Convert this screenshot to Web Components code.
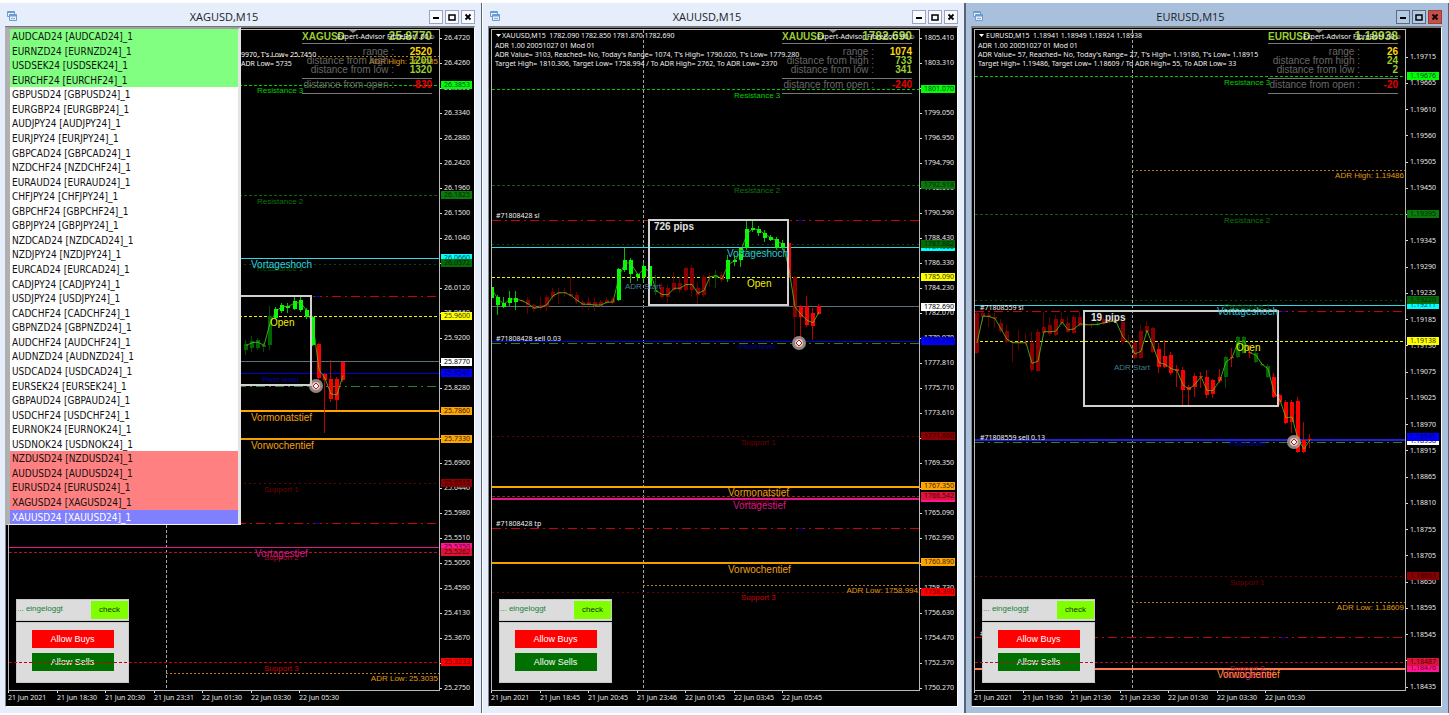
<!DOCTYPE html>
<html lang="de">
<head>
<meta charset="utf-8">
<title>Charts</title>
<style>
  html, body { margin: 0; height: 100%; background: #fff; }
  body { font-family: "Liberation Sans", Arial, sans-serif; overflow: hidden; }
</style>
</head>
<body>
<chart-desktop>
  <chart-window symbol="XAGUSD"></chart-window>
  <chart-window symbol="XAUUSD"></chart-window>
  <chart-window symbol="EURUSD" active></chart-window>
  <symbol-list slot="popup"></symbol-list>
</chart-desktop>

<script>
const SMALL = '"Noto Sans", "Open Sans", sans-serif';
const RED = '#ff0000', DARK = '#8a0000', LIME = '#00ff00', DG = '#006400';

/* Line styles: name -> [colour, width, dash pattern] */
const STYLES = {
  r3: ['#00c800', 1, '3 2'], r2: ['#0a640a', 1, '3 2'], r1: ['#064a06', 1, '2 3'],
  s1: ['#6a0000', 1, '2 3'], s2: ['#b01030', 1, '3 2'], s3: ['#c80000', 1, '3 2'],
  cyan: ['#30d8e8', 1, ''], open: ['#f0f000', 1, '3 2'], bid: ['#5c6e78', 1, ''],
  pivot: ['#0000d8', 1, ''], month: ['#ffa500', 2, ''], week: ['#f0a000', 2, ''],
  pink: ['#e01888', 1, ''], coral: ['#ff7a50', 2, ''], sl: ['#c80010', 1, '9 4 2 4'],
  order: ['#308030', 1, '9 4 2 4'], adr: ['#b87c10', 1, '2 2'], navy: ['#2020e0', 2, '']
};

/* x is measured from the window's left edge, y from the top of the desktop. */
const CHARTS = {
  XAGUSD: {
    axis: 34, last: '25.8770', range: ['2520', '1200', '1320', '-830'], pad: [6, 0],
    notes: [['9970, T\'s Low= 25.7450', 241, 57], ['ADR Low= 5735', 241, 66]],
    scale: '26.4720 26.4260 26.3800 26.3340 26.2880 26.2420 26.1960 26.1500 26.1040 26.0580 26.0120 25.9660 25.9200 25.8740 25.8280 25.7820 25.7360 25.6900 25.6440 25.5980 25.5510 25.5050 25.4590 25.4130 25.3670 25.3210 25.2750',
    times: ['21 Jun 2021', '21 Jun 18:30', '21 Jun 20:30', '21 Jun 23:31', '22 Jun 01:30', '22 Jun 03:30', '22 Jun 05:30'],
    vline: 166, box: [168, 296, 311, 385], marker: [316, 386],
    lines: [['adr', 56, 166], ['r3', 85], ['r2', 195], ['cyan', 258], ['r1', 264], ['sl', 296], ['open', 316], ['bid', 361], ['pivot', 373], ['order', 386], ['month', 411], ['week', 439], ['s1', 483], ['sl', 523], ['pink', 547], ['s2', 552], ['adr', 673, 166]],
    top: [['s3', 662]], blue: [296, 523],
    labels: [['Resistance 3', 257, 93, '#00d000', 8], ['Resistance 2', 257, 204, '#0a780a', 8], ['Resistance 1', 257, 271, '#065a06', 8], ['Vortageshoch', 251, 268, '#30d0e0', 10], ['Open', 270, 326, '#f0f000', 10], ['Pivot level', 262, 382, '#0000b0', 8], ['Vormonatstief', 251, 421, '#f0a010', 10], ['Vorwochentief', 251, 449, '#f0a010', 10], ['Support 1', 264, 492, '#700000', 8], ['Support 2', 264, 560, '#b01030', 8], ['Vortagestief', 255, 557, '#d01880', 10], ['Support 3', 264, 671, '#d00000', 8]],
    adr: [['ADR High: 26.4085', 64], ['ADR Low: 25.3035', 681]],
    tags: [['26.3853', 85, '#00ff00', '#043'], ['26.1825', 195, '#0a7a0a', '#042a04'], ['26.0660', 258, '#00ffff', '#046'], ['26.0572', 263, '#066a06', '#021'], ['25.9600', 316, '#ffff00', '#330'], ['25.8770', 362, '#ffffff', '#000'], ['25.8540', 373, '#0000ff', '#000060'], ['25.7860', 411, '#ffa500', '#321'], ['25.7330', 439, '#ffa500', '#321'], ['25.6515', 483, '#8b0000', '#300'], ['25.5350', 547, '#ff1493', '#602'], ['25.5262', 552, '#dc143c', '#500'], ['25.3233', 662, '#ff0000', '#600']],
    start: 245,
    candles: [[340,344,350,355,DG],[336,341,348,352,DG],[338,340,348,350,DG],[343,345,347,352,DG],[306,316,345,350,DG],[307,309,318,319,LIME],[303,305,311,313,LIME],[303,306,308,313,LIME],[297,301,309,310,LIME],[297,300,310,312,LIME],[308,310,317,319,LIME],[316,317,345,346,LIME],[343,344,378,380,RED],[373,374,380,433,RED],[360,379,399,402,RED],[377,379,400,410,RED],[361,362,380,382,RED]]
  },
  XAUUSD: {
    axis: 37, last: '1782.690', range: ['1074', '733', '341', '-240'], pad: [6, 0],
    notes: [['XAUUSD,M15  1782.090 1782.850 1781.870 1782.690', 19, 38], ['ADR 1.00 20051027 01 Mod 01', 12, 48], ['ADR Value= 3103, Reached= No, Today\'s Range= 1074, T\'s High= 1790.020, T\'s Low= 1779.280', 12, 57], ['Target High= 1810.306, Target Low= 1758.994 / To ADR High= 2762, To ADR Low= 2370', 12, 66], ['#71808428 sl', 13, 218], ['#71808428 sell 0.03', 13, 341], ['#71808428 tp', 13, 526]],
    scale: '1805.410 1803.310 1801.210 1799.050 1796.950 1794.790 1792.690 1790.590 1788.430 1786.330 1784.230 1782.070 1779.970 1777.810 1775.710 1773.610 1771.450 1769.350 1767.250 1765.090 1762.990 1760.890 1758.730 1756.630 1754.470 1752.370 1750.270',
    times: ['21 Jun 2021', '21 Jun 18:45', '21 Jun 20:45', '21 Jun 23:46', '22 Jun 01:45', '22 Jun 03:45', '22 Jun 05:45'],
    vline: 160, box: [166, 220, 305, 305], marker: [316, 343], pips: ['726 pips', 171, 230], start: 8,
    lines: [['r3', 89], ['r2', 185], ['sl', 220], ['r1', 244], ['cyan', 247], ['open', 277], ['bid', 306], ['pivot', 341], ['order', 343], ['s1', 436], ['month', 487], ['s2', 496], ['pink', 498], ['pink', 499], ['sl', 528], ['week', 563], ['adr', 585, 160], ['s1', 592]],
    top: [], blue: [220, 528],
    labels: [['Resistance 3', 251, 98, '#00d000', 8], ['Resistance 2', 251, 193, '#0a780a', 8], ['Resistance 1', 251, 254, '#064a06', 8], ['Vortageshoch', 244, 257, '#30c0d0', 10], ['ADR Start', 142, 289, '#4a7c98', 8], ['Open', 264, 287, '#f0f000', 10], ['Pivot level', 256, 349, '#0000b0', 8], ['Support 1', 258, 445, '#700000', 8], ['Vormonatstief', 245, 496, '#f0a010', 10], ['Support 2', 258, 505, '#900020', 8], ['Vortagestief', 250, 509, '#d01880', 10], ['Vorwochentief', 245, 573, '#f0a010', 10], ['Support 3', 258, 600, '#d00000', 8]],
    adr: [['ADR Low: 1758.994', 593]],
    tags: [['1801.070', 89, '#00ff00', '#043'], ['1792.918', 185, '#0a7a0a', '#042a04'], ['1787.660', 247, '#00ffff', '#046'], ['1787.882', 244, '#066a06', '#021'], ['1785.090', 277, '#ffff00', '#330'], ['1782.690', 307, '#ffffff', '#000'], ['1779.770', 341, '#0000ff', '#000060'], ['1771.660', 436, '#8b0000', '#300'], ['1767.350', 486, '#ffa500', '#321'], ['1766.320', 498, '#ff1493', '#602'], ['1766.542', 496, '#dc143c', '#500'], ['1760.890', 562, '#ffa500', '#321'], ['1758.390', 592, '#ff0000', '#600']],
    candles: [[272,287,298,299,LIME],[295,297,305,315,LIME],[297,303,307,308,LIME],[291,298,303,306,LIME],[291,298,302,310,LIME],[299,300,301,302,DARK],[297,300,305,314,DARK],[304,305,309,312,DARK],[297,305,308,310,DARK],[295,297,307,311,DARK],[288,292,297,300,DARK],[288,292,293,304,DARK],[288,292,293,297,DARK],[277,294,296,297,DARK],[292,295,302,304,DARK],[300,302,305,309,DARK],[297,302,305,310,DARK],[298,302,306,311,DARK],[300,302,306,307,DARK],[297,300,303,304,DARK],[297,299,303,305,DARK],[268,269,300,301,LIME],[248,260,270,272,LIME],[258,260,274,283,LIME],[273,274,277,281,LIME],[262,266,277,283,LIME],[265,266,286,287,LIME],[275,290,292,295,DG],[283,287,297,299,DARK],[285,288,297,303,DARK],[272,283,290,292,DARK],[277,283,290,293,DARK],[267,268,290,292,DARK],[265,268,290,297,DARK],[282,288,295,304,DARK],[275,277,295,297,DARK],[273,276,277,286,DARK],[270,275,278,288,DG],[272,275,280,282,DARK],[255,260,279,282,LIME],[255,260,262,266,LIME],[247,248,260,267,LIME],[219,229,248,250,LIME],[219,228,230,232,LIME],[226,229,233,236,LIME],[230,233,238,242,LIME],[235,237,240,241,LIME],[237,239,248,250,LIME],[240,243,248,250,LIME],[242,243,278,279,RED],[276,277,317,340,DARK],[305,306,317,343,RED],[296,306,325,327,RED],[308,313,326,340,RED],[304,306,314,315,RED]]
  },
  EURUSD: {
    axis: 35, last: '1.18938', range: ['26', '24', '2', '-20'], pad: [25, 1],
    notes: [['EURUSD,M15  1.18941 1.18949 1.18924 1.18938', 20, 38], ['ADR 1.00 20051027 01 Mod 01', 12, 48], ['ADR Value= 57, Reached= No, Today\'s Range= 27, T\'s High= 1.19180, T\'s Low= 1.18915', 12, 57], ['Target High= 1.19486, Target Low= 1.18609 / To ADR High= 55, To ADR Low= 33', 12, 66], ['#71808559 sl', 14, 310], ['#71808559 sell 0.13', 14, 440], ['#71808559 tp', 14, 636]],
    scale: '1.19715 1.19665 1.19610 1.19560 1.19505 1.19450 1.19400 1.19345 1.19290 1.19235 1.19185 1.19130 1.19075 1.19025 1.18970 1.18915 1.18865 1.18810 1.18755 1.18705 1.18650 1.18595 1.18545 1.18490 1.18435',
    times: ['21 Jun 2021', '21 Jun 19:30', '21 Jun 21:30', '21 Jun 23:30', '22 Jun 01:30', '22 Jun 03:30', '22 Jun 05:30'],
    vline: 166, box: [118, 311, 312, 406], marker: [328, 442], pips: ['19 pips', 125, 321], start: 10,
    lines: [['r3', 76], ['adr', 170, 166], ['r2', 214], ['r1', 300], ['cyan', 305], ['sl', 311], ['open', 341], ['navy', 440], ['order', 442], ['s1', 576], ['adr', 602, 166], ['sl', 637], ['coral', 669]],
    top: [['s2', 662]], blue: [311, 637],
    labels: [['Resistance 3', 258, 85, '#00d000', 8], ['Resistance 2', 258, 223, '#0a780a', 8], ['Resistance 1', 258, 309, '#065a06', 8], ['Vortageshoch', 251, 315, '#30c0d0', 10], ['Open', 270, 351, '#f0f000', 10], ['ADR Start', 148, 370, '#3c7c88', 8], ['Pivot level', 263, 446, '#0000b0', 8], ['Support 1', 264, 585, '#700000', 8], ['Support 2', 264, 671, '#b01030', 8], ['Vortagestief', 256, 678, '#d01880', 10], ['Vorwochentief', 251, 678, '#ff9020', 10]],
    adr: [['ADR High: 1.19486', 178], ['ADR Low: 1.18609', 610]],
    tags: [['1.19676', 76, '#00ff00', '#043'], ['1.19395', 214, '#0a7a0a', '#042a04'], ['1.19211', 305, '#00ffff', '#046'], ['1.19220', 300, '#066a06', '#021'], ['1.19138', 341, '#ffff00', '#330'], ['1.18938', 441, '#ffffff', '#000'], ['1.18941', 437, '#0000ff', '#000060'], ['1.18663', 576, '#8b0000', '#300'], ['1.18476', 668, '#ff1493', '#602'], ['1.18487', 662, '#dc143c', '#500']],
    candles: [[311,313,353,354,DARK],[312,313,317,322,DARK],[313,315,317,327,DARK],[313,317,319,328,DARK],[319,323,331,333,DARK],[325,331,342,343,DARK],[340,342,343,362,DARK],[330,342,343,350,DARK],[333,342,343,345,DARK],[332,343,370,372,DARK],[329,332,371,372,DARK],[312,327,333,334,DARK],[317,325,334,336,DARK],[315,319,335,336,DARK],[312,319,323,325,DARK],[317,323,332,333,DARK],[315,317,333,334,DARK],[312,317,326,327,DARK],[323,324,325,326,DARK],[323,324,325,328,DARK],[322,324,325,326,DG],[317,319,324,325,DARK],[318,320,322,324,DARK],[317,320,322,323,DARK],[320,322,342,345,DARK],[335,342,343,344,DARK],[340,342,358,359,DARK],[325,331,358,359,DARK],[321,326,332,333,DARK],[327,328,352,353,DARK],[343,349,367,373,RED],[340,356,367,368,RED],[352,355,373,375,RED],[365,369,371,387,RED],[367,370,390,407,RED],[385,387,390,406,RED],[373,376,387,397,RED],[372,376,377,388,RED],[370,377,395,398,RED],[379,380,394,398,RED],[369,377,381,383,RED],[356,357,377,388,DG],[348,357,358,367,RED],[336,337,357,358,DG],[336,337,353,354,DG],[345,352,353,358,RED],[350,353,362,363,DG],[362,364,365,366,DG],[364,366,377,378,DG],[373,377,397,398,RED],[394,395,402,405,RED],[400,402,423,424,RED],[400,402,422,433,RED],[397,401,452,453,RED],[422,440,452,453,RED],[434,439,440,448,RED]]
  }
};
const ORIGIN_X = 9, ORIGIN_Y = 30, PITCH = 97 / 16;

class ChartDesktop extends HTMLElement {
  constructor() {
    super();
    this.attachShadow({ mode: 'open' }).innerHTML = `
      <style>
        :host { display: block; position: relative; height: 100vh; box-sizing: border-box; padding: 3px 0 2px; background: #fff; }
        .grid { display: grid; grid-template-columns: repeat(3, minmax(0, 1fr)); height: 100%; }
        ::slotted([slot=popup]) { position: absolute; left: 5px; top: 27px; }
      </style>
      <div class="grid"><slot></slot></div><slot name="popup"></slot>`;
  }
}

class ChartWindow extends HTMLElement {
  constructor() {
    super();
    const name = this.getAttribute('symbol');
    const c = CHARTS[name];
    this.attachShadow({ mode: 'open' }).innerHTML = `
      <style>
        :host { display: flex; flex-direction: column; box-sizing: border-box; margin-right: 1px; padding: 0 6px 6px 5px;
                background: #e6eefc; border-right: 1px solid #5a6470; min-width: 0; }
        :host([active]) { margin-right: 0; background: #a8c0dc; box-shadow: -1px 0 #5a6470; }
        header { display: flex; align-items: center; height: 23px; padding: 0 0 0 1px; gap: 2px; }
        h2 { flex: 1; margin: 0; padding: 4px 0 0 1px; text-align: center; font: 400 11px/18px "Open Sans", "Noto Sans", sans-serif; color: #222; }
        .icon { width: 12px; height: 12px; margin-top: 3px; }
        button { width: 14px; height: 14px; margin-top: 4px; padding: 0; border: 1px solid #9aa4c0; background: #f8faff; display: grid; place-items: center; }
        :host([active]) button { background: #b4cae4; border-color: #5a6a80; }
        :host([active]) button.close { background: #c8504a; border-color: #a03c38; }
        button svg { width: 10px; height: 10px; }
        main { flex: 1; min-height: 0; display: grid; grid-template-columns: minmax(0, 1fr) ${c.axis}px; grid-template-rows: minmax(0, 1fr) 15px;
               background: #000; border: 1px solid; border-color: #777 #fff #fff #888; border-top-width: 2px; padding: 1px 0 0 2px; }
        .plot { position: relative; border: 1px solid #b8b8b8; overflow: hidden; }
        .plot svg { position: absolute; inset: 0; width: 100%; height: 100%; }
        .over { pointer-events: none; }
        .scale { position: relative; display: flex; flex-direction: column; justify-content: space-between; padding: ${c.pad[0]}px 0 ${c.pad[1]}px;
                 color: #e8e8e8; font: 7px/6px ${SMALL}; }
        .scale span { display: flex; align-items: center; gap: 2px; }
        .scale span::before { content: ""; width: 2px; height: 1px; background: #ddd; }
        .tag { position: absolute; left: 1px; right: 2px; height: 8px; line-height: 8px; padding-left: 3px; }
        ol { grid-column: 1 / 3; margin: 0; padding: 0; list-style: none; display: flex; color: #e8e8e8; font: 7px/13px ${SMALL}; }
        li { flex: 0 0 auto; width: 48px; margin-right: 1px; white-space: nowrap; position: relative; }
        li:nth-child(even) { margin-right: 0; }
        li::before { content: ""; position: absolute; left: 0; top: 0; width: 1px; height: 2px; background: #ddd; }
        login-panel { position: absolute; left: 7px; bottom: 7px; }
        range-info { position: absolute; right: 7px; top: 0; }
      </style>
      <header>
        <svg class="icon" viewBox="0 0 12 12" fill="#e8f2fc" stroke="#6a9cd0"><path d="M1.500 1.500h7v5h-7z"/><path d="M1 2.500h8M3.500 4.500h7v6h-7z"/><path d="M3 5.500h8" stroke-width="2"/><path d="M5 9l1.500-1 1 1L9 8"/></svg>
        <h2>${name},M15</h2>
        <button aria-label="Minimize"><svg viewBox="0 0 10 10"><path d="M2 5h6v2H2z"/></svg></button>
        <button aria-label="Maximize"><svg viewBox="0 0 10 10"><path d="M2 3h6v5H2z" fill="none" stroke="#000" stroke-width="1.500"/></svg></button>
        <button class="close" aria-label="Close"><svg viewBox="0 0 10 10"><path d="M2.500 2.500l5 5m0-5l-5 5" stroke="#000" stroke-width="1.800"/></svg></button>
      </header>
      <main>
        <div class="plot">
          ${this.drawPlot(c)}
          <range-info symbol="${name}"></range-info>
          <login-panel></login-panel>
          <svg class="over">${c.top.map(l => this.line(l)).join('')}</svg>
        </div>
        <div class="scale">
          ${c.scale.split(' ').map(v => `<span>${v}</span>`).join('')}
          ${c.tags.map(t => `<div class="tag" style="top:${t[1] - 33}px;background:${t[2]};color:${t[3]}">${t[0]}</div>`).join('')}
        </div>
        <ol>${c.times.map(t => `<li>${t}</li>`).join('')}</ol>
      </main>`;
  }

  line([kind, y, from]) {
    const [colour, width, dash] = STYLES[kind];
    const py = y - ORIGIN_Y + (width === 1 ? 0.5 : 0);
    return `<line x1="${from ? from - ORIGIN_X : 0}" x2="100%" y1="${py}" y2="${py}" stroke="${colour}" stroke-width="${width}" stroke-dasharray="${dash}"/>`;
  }

  text(content, x, y, colour, size, extra = '') {
    return `<text x="${x - ORIGIN_X}" y="${y - ORIGIN_Y}" fill="${colour}" font-size="${size}" ${extra}>${content}</text>`;
  }

  drawPlot(c) {
    const candle = ([high, top, bottom, low, colour], i) => {
      const x = Math.round(c.start - ORIGIN_X + i * PITCH);
      return `<path d="M${x + 0.5} ${high - ORIGIN_Y}V${low - ORIGIN_Y}" stroke="${colour}" opacity=".75"/><rect x="${x - 1}" y="${top - ORIGIN_Y}" width="4" height="${bottom - top}" fill="${colour}"/>`;
    };
    const trend = c.candles.map(([h, t, b, l, colour], i) => {
      const y = colour === LIME || colour === DG ? t : b;
      return `${Math.round(c.start - ORIGIN_X + i * PITCH) + 1},${(y + (t + b) / 2) / 2 - ORIGIN_Y}`;
    }).join(' ');
    const [x1, y1, x2, y2] = c.box;
    const [mx, my] = [c.marker[0] - ORIGIN_X, c.marker[1] - ORIGIN_Y];
    return `<svg font-family="Liberation Sans, Arial, sans-serif">
      <line x1="${c.vline - ORIGIN_X + 0.5}" x2="${c.vline - ORIGIN_X + 0.5}" y1="0" y2="100%" stroke="#a8a8a8" stroke-dasharray="3 2"/>
      ${c.lines.map(l => this.line(l)).join('')}
      ${c.blue.map(y => `<path d="M${315 - ORIGIN_X} ${y - ORIGIN_Y + 0.5}h5" stroke="#0000c0"/>`).join('')}
      ${c.candles.map(candle).join('')}
      <polyline points="${trend}" fill="none" stroke="#50c818" opacity=".8"/>
      <circle cx="${mx}" cy="${my}" r="7" fill="#a89c94" opacity=".85"/><circle cx="${mx}" cy="${my}" r="4" fill="#d8ccc8"/>
      <path d="M${mx} ${my - 3}l3 3-3 3-3-3z" fill="#fff" stroke="#d01010"/>
      <rect x="${x1 - ORIGIN_X}" y="${y1 - ORIGIN_Y}" width="${x2 - x1}" height="${y2 - y1}" fill="none" stroke="#d0d0d0" stroke-width="2"/>
      ${c.labels.map(l => this.text(...l)).join('')}
      ${c.adr.map(([t, y]) => `<svg x="100%" overflow="visible"><text x="-1" y="${y - ORIGIN_Y}" text-anchor="end" fill="#e09a10" font-size="8">${t}</text></svg>`).join('')}
      ${c.notes.map(([t, x, y]) => this.text(t, x, y, '#f0f0f0', 7, `xml:space="preserve" font-family='${SMALL}'`)).join('')}
      ${c.notes.length > 2 ? `<path d="M4 4h5l-2.500 3z" fill="#fff"/>` : ''}
      ${c.pips ? this.text(c.pips[0], c.pips[1], c.pips[2], '#e0e0e0', 10, 'font-weight="700"') : ''}
    </svg>`;
  }
}

class RangeInfo extends HTMLElement {
  constructor() {
    super();
    const name = this.getAttribute('symbol');
    const c = CHARTS[name];
    const [range, high, low, open] = c.range;
    this.attachShadow({ mode: 'open' }).innerHTML = `
      <style>
        :host { display: block; width: 130px; color: #686868; font: 10px/9px "Liberation Sans", Arial, sans-serif; }
        .head, .row { display: flex; justify-content: flex-end; white-space: nowrap; }
        .head { justify-content: space-between; height: 13px; line-height: 13px; border-bottom: 1px solid #777; color: #9acd32; font-weight: 700; position: relative; }
        .head b { font-size: 12px; }
        .ea { position: absolute; left: 35px; top: 0; color: #f0f0f0; font: 7px/13px ${SMALL}; }
        .mark { position: absolute; left: 47px; top: 0; width: 8px; height: 3px; background: #888; clip-path: polygon(0 0, 100% 0, 50% 100%); }
        .body { padding: 3px 0 4px; border-bottom: 1px solid #777; }
        .row b { width: 38px; text-align: right; color: #9acd32; }
        .row b.y { color: #ffd800; }
        .open { line-height: 12px; height: 14px; border-bottom: 1px solid #777; }
        .open b { color: #e80000; }
      </style>
      <div class="head"><span>${name}</span><b>${c.last}</b><i class="mark"></i><span class="ea">Expert-Advisor FibreBot1.00☺</span></div>
      <div class="body">
        <div class="row">range :<b class="y">${range}</b></div>
        <div class="row">distance from high :<b>${high}</b></div>
        <div class="row">distance from low :<b>${low}</b></div>
      </div>
      <div class="row open">distance from open :<b>${open}</b></div>`;
  }
}

class LoginPanel extends HTMLElement {
  constructor() {
    super();
    this.attachShadow({ mode: 'open' }).innerHTML = `
      <style>
        :host { display: block; width: 113px; font: 9px/17px "Liberation Sans", Arial, sans-serif; }
        .status, .actions { box-sizing: border-box; background: #dcdcdc; border: 1px solid #c8c8c8; }
        .status { display: flex; justify-content: space-between; height: 22px; padding: 1px 0; margin-bottom: 1px; color: #208038; font-size: 8px; line-height: 16px; }
        .actions { display: flex; flex-direction: column; align-items: center; gap: 5px; height: 61px; padding-top: 7px; }
        button { font: inherit; border: 0; padding: 0; height: 18px; width: 82px; color: #fff; background: #f00; }
        button.sell { background: #007000; }
        button.check { width: 37px; color: #103010; background: #80ff00; }
      </style>
      <div class="status"><span>... eingeloggt</span><button class="check">check</button></div>
      <div class="actions"><button>Allow Buys</button><button class="sell">Allow Sells</button></div>`;
  }
}

class SymbolList extends HTMLElement {
  constructor() {
    super();
    const names = 'AUDCAD EURNZD USDSEK EURCHF GBPUSD EURGBP AUDJPY EURJPY GBPCAD NZDCHF EURAUD CHFJPY GBPCHF GBPJPY NZDCAD NZDJPY EURCAD CADJPY USDJPY CADCHF GBPNZD AUDCHF AUDNZD USDCAD EURSEK GBPAUD USDCHF EURNOK USDNOK NZDUSD AUDUSD EURUSD XAGUSD XAUUSD'.split(' ');
    const tone = i => i < 4 ? 'up' : i === 33 ? 'sel' : i > 28 ? 'down' : '';
    this.attachShadow({ mode: 'open' }).innerHTML = `
      <style>
        :host { display: block; box-sizing: border-box; width: 236px; height: 498px; border: solid; border-width: 2px 3px 1px 5px; border-color: #a0a0a0 #e4e4e4 #f4f4f4 #b0b0b0; background: #fff; }
        ul { display: flex; flex-direction: column; height: 100%; margin: 0; padding: 0; list-style: none; font: 10px/16px "DejaVu Sans Condensed", "DejaVu Sans", sans-serif; color: #101010; }
        li { flex: 1 1 0; min-height: 0; padding-left: 2px; white-space: nowrap; }
        .up { background: #80ff80; }
        .down { background: #ff8080; }
        .sel { background: #8080ff; color: #fff; }
      </style>
      <ul role="listbox" aria-label="Symbols">${names.map((n, i) => `<li role="option" class="${tone(i)}">${n}24 [${n}24]_1</li>`).join('')}</ul>`;
  }
}

customElements.define('range-info', RangeInfo);
customElements.define('login-panel', LoginPanel);
customElements.define('symbol-list', SymbolList);
customElements.define('chart-window', ChartWindow);
customElements.define('chart-desktop', ChartDesktop);
</script>
</body>
</html>
